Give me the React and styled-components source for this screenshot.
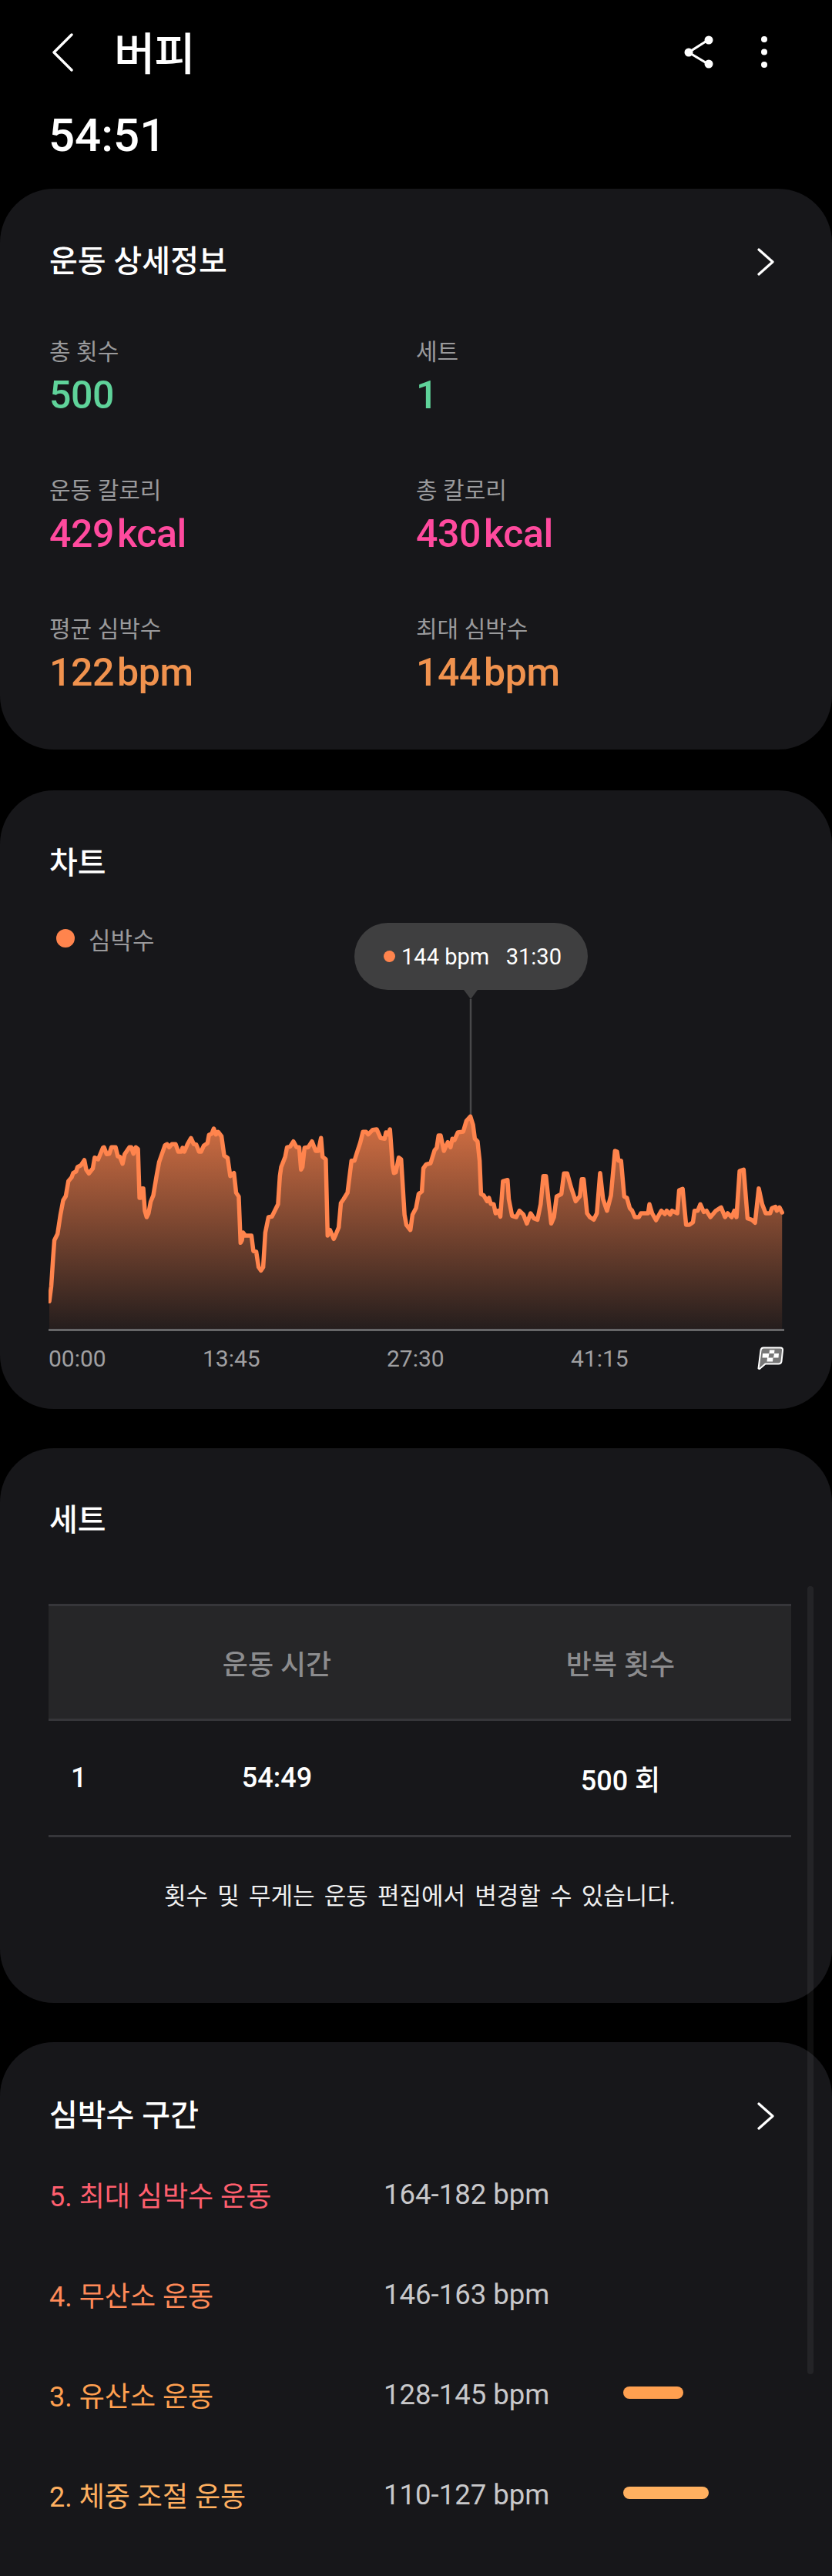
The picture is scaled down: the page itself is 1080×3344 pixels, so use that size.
import React from 'react';
import styled, { createGlobalStyle } from 'styled-components';

const GlobalStyle = createGlobalStyle`
  html, body { margin: 0; padding: 0; background: #000; }
  body { font-family: Roboto, "Noto Sans CJK KR", sans-serif; color: #fff; }
`;

// traced heart rate curve, in px of the reference (x from chart left, y from 1400)
const leftTrace = [[186,868],[193,810],[200,700],[205,630],[217,605],[228,530],[238,475],[248,458],[258,400],[270,385],[276,368],[287,362],[292,345],[305,338],[318,318],[325,355],[335,370],[350,350],[357,308],[370,315],[388,270],[392,268],[402,295],[412,293],[420,268],[436,268],[444,303],[452,305],[462,332],[470,295],[488,268],[495,268],[503,293],[512,268],[520,275],[526,465],[530,465],[536,428],[540,428],[546,515],[553,540],[560,525],[568,480],[578,455],[590,380],[600,325],[622,260],[630,256],[638,268],[648,256],[662,256],[672,285],[684,285],[688,270],[695,285],[707,255],[720,232],[730,255],[740,258],[750,285],[758,285],[768,262],[782,252],[788,220],[798,215],[806,195],[814,218],[822,208],[835,225],[845,300],[858,310],[868,380],[882,368],[890,445],[900,460],[907,640],[912,630],[916,600],[925,612],[948,612],[955,672],[966,675],[975,735],[984,748],[992,735],[1000,600],[1012,540],[1025,538],[1048,490],[1055,380],[1060,345],[1075,305],[1082,268],[1094,265],[1106,245],[1118,268],[1128,268],[1135,355],[1140,345],[1148,270],[1162,268],[1176,245],[1190,282],[1200,282],[1210,232],[1216,305],[1228,315],[1235,612],[1244,590],[1258,625],[1265,610],[1277,580],[1285,485],[1295,470],[1310,445],[1325,320],[1336,320],[1345,290],[1358,250],[1368,208],[1380,208],[1388,218],[1405,200],[1420,198],[1435,232],[1450,235],[1455,210],[1462,218],[1470,198],[1480,340],[1485,368],[1492,365],[1503,308],[1512,315],[1525,530],[1532,570],[1547,590],[1555,530]];
const rightTrace = [[0,505],[10,450],[22,440],[28,350],[38,335],[55,330],[70,280],[78,270],[85,222],[93,222],[105,282],[120,248],[130,268],[137,235],[145,240],[158,210],[178,207],[190,165],[205,148],[215,180],[222,235],[232,245],[240,320],[245,450],[255,455],[268,478],[275,465],[282,488],[293,490],[300,525],[310,515],[318,538],[328,400],[345,395],[350,470],[362,535],[378,540],[390,515],[405,530],[418,565],[432,525],[445,545],[458,550],[470,490],[480,380],[490,380],[500,480],[510,565],[520,540],[530,460],[548,450],[558,370],[570,370],[585,425],[602,478],[618,458],[625,392],[632,392],[645,525],[655,540],[670,550],[682,525],[694,368],[705,470],[720,515],[735,455],[750,282],[758,285],[763,320],[773,320],[785,460],[795,465],[806,505],[815,515],[825,540],[840,540],[848,525],[875,525],[880,490],[890,525],[905,552],[925,515],[938,528],[945,515],[958,530],[965,515],[985,525],[992,435],[1005,430],[1018,570],[1030,570],[1044,560],[1050,515],[1062,515],[1072,490],[1085,520],[1095,515],[1110,540],[1130,515],[1150,502],[1165,540],[1175,525],[1190,540],[1200,515],[1208,540],[1220,360],[1235,355],[1250,545],[1265,550],[1278,562],[1292,428],[1305,490],[1318,525],[1335,525],[1342,505],[1355,500],[1360,515],[1370,502],[1380,522]];

const PLOT_H = 487;
const trace = [
  ...leftTrace.map(([x, y]) => [x / 2.904 - 63, y / 3 + 162]),
  ...rightTrace.map(([x, y]) => [540 + x / 2.904 - 63, y / 3 + 162]),
];
const linePath = 'M' + trace.map(([x, y]) => `${x.toFixed(1)} ${y.toFixed(1)}`).join('L');
const areaPath = `${linePath}L${trace[trace.length - 1][0].toFixed(1)} ${PLOT_H}L${trace[0][0].toFixed(1)} ${PLOT_H}Z`;

const Page = styled.div`
  position: relative;
  width: 1080px;
  height: 3344px;
  overflow: hidden;
  background: #000;
`;
const TopBar = styled.div`
  display: flex;
  align-items: center;
  height: 136px;
  padding: 0 83px 0 68px;
`;
const PageTitle = styled.div`
  flex: 1;
  margin-left: 52px;
  font-size: 58px;
  font-weight: 500;
  line-height: 136px;
  padding-top: 3px;
  height: 133px;
  letter-spacing: -1px;
`;
const Actions = styled.div`
  display: flex;
  align-items: center;
  gap: 59px;
`;
const Duration = styled.div`
  padding-left: 63px;
  height: 109px;
  font-size: 60px;
  font-weight: 500;
  line-height: 80px;
`;
const Card = styled.section`
  background: #17171a;
  border-radius: 70px;
  height: ${p => p.$h}px;
  padding: ${p => p.$top}px 0 0 64px;
  margin-bottom: ${p => p.$gap}px;
  box-sizing: border-box;
`;
const CardHead = styled.div`
  display: flex;
  align-items: center;
  justify-content: space-between;
  height: 60px;
  padding-right: 75px;
`;
const CardTitle = styled.h2`
  margin: 0;
  font-size: 40px;
  font-weight: 500;
  line-height: 60px;
`;
const StatGrid = styled.div`
  display: grid;
  grid-template-columns: 476px 1fr;
  grid-auto-rows: 100px;
  row-gap: 80px;
  margin-top: 67px;
`;
const StatLabel = styled.div`
  font-size: 30px;
  line-height: 40px;
  color: #9a9a9c;
`;
const StatValue = styled.div`
  margin-top: 6px;
  font-size: 50px;
  font-weight: 500;
  line-height: 60px;
  letter-spacing: -0.4px;
  color: ${p => p.$color};
`;
const Unit = styled.span`
  margin-left: 4px;
`;
const ChartSection = styled.div`
  position: relative;
  margin-top: 47px;
  width: 955px;
  margin-left: -1px;
`;
const Legend = styled.div`
  display: flex;
  align-items: center;
  gap: 18px;
  height: 40px;
  padding-left: 10px;
  font-size: 31px;
  color: #9a9a9c;
`;
const LegendDot = styled.span`
  width: 24px;
  height: 24px;
  border-radius: 50%;
  background: #ff844d;
`;
const Tooltip = styled.div`
  position: absolute;
  top: 0;
  left: 397px;
  display: flex;
  align-items: center;
  justify-content: center;
  gap: 8px;
  width: 303px;
  height: 87px;
  padding-left: 4px;
  box-sizing: border-box;
  border-radius: 44px;
  background: #3f3f40;
  font-size: 29px;
  white-space: pre;
  &::after {
    content: "";
    position: absolute;
    left: 142px;
    bottom: -12px;
    border-left: 9px solid transparent;
    border-right: 9px solid transparent;
    border-top: 12px solid #3f3f40;
  }
`;
const TooltipDot = styled.span`
  width: 15px;
  height: 15px;
  border-radius: 50%;
  background: #ff844d;
`;
const Plot = styled.div`
  height: ${PLOT_H}px;
  border-bottom: 3px solid #666668;
  svg { display: block; }
`;
const Axis = styled.div`
  display: grid;
  grid-template-columns: 200px 239px 239px 1fr auto;
  align-items: center;
  height: 70px;
  font-size: 30px;
  color: #a0a0a2;
`;
const SetTable = styled.div`
  width: 964px;
  margin: 78px 0 0 -1px;
`;
const SetRow = styled.div`
  display: grid;
  grid-template-columns: 72px 449px 1fr;
  align-items: center;
  height: ${p => p.$h}px;
  box-sizing: border-box;
  border-bottom: 3px solid #36363a;
  font-size: 36px;
  font-weight: 500;
  text-align: center;
  ${p => p.$head && `
    border-top: 3px solid #36363a;
    background: #262628;
    color: #8c8c8e;
  `}
`;
const SetIndex = styled.span`
  text-align: left;
  padding-left: 29px;
`;
const Note = styled.p`
  width: 964px;
  margin: 52px 0 0 -1px;
  font-size: 31px;
  line-height: 50px;
  text-align: center;
  word-spacing: 4.5px;
  color: #f0f0f0;
`;
const ZoneList = styled.div`
  margin-top: 6px;
`;
const ZoneRow = styled.div`
  display: grid;
  grid-template-columns: 434px 311px 1fr;
  align-items: center;
  height: 130px;
  font-size: 36px;
`;
const ZoneName = styled.span`
  color: ${p => p.$color};
`;
const ZoneRange = styled.span`
  font-size: 36.5px;
  color: #c8c8ca;
`;
const ZoneBar = styled.span`
  display: block;
  width: ${p => p.$w}px;
  height: 16px;
  margin-top: -4px;
  border-radius: 8px;
  background: ${p => p.$color};
`;
const Scrollbar = styled.div`
  position: absolute;
  top: 2059px;
  left: 1048px;
  width: 8px;
  height: 1023px;
  border-radius: 4px;
  background: rgba(255, 255, 255, 0.06);
`;

const BackIcon = () => (
  <svg width="28" height="50" viewBox="0 0 28 50" fill="none" stroke="#fff" strokeWidth="3.4" strokeLinecap="round" strokeLinejoin="round">
    <path d="M25 2 2 25 25 48" />
  </svg>
);
const ShareIcon = () => (
  <svg width="40" height="44" viewBox="0 0 40 44" fill="#fff" stroke="#fff">
    <path d="M31 6 6 22 31 37" fill="none" strokeWidth="3.2" />
    <circle cx="32" cy="6" r="5.5" stroke="none" />
    <circle cx="6" cy="22" r="5.5" stroke="none" />
    <circle cx="32" cy="37" r="5.5" stroke="none" />
  </svg>
);
const MoreIcon = () => (
  <svg width="10" height="44" viewBox="0 0 10 44" fill="#fff">
    <circle cx="5" cy="5" r="4" />
    <circle cx="5" cy="21.5" r="4" />
    <circle cx="5" cy="38" r="4" />
  </svg>
);
const Chevron = () => (
  <svg width="22" height="36" viewBox="0 0 22 36" fill="none" stroke="#fff" strokeWidth="3.2" strokeLinecap="round" strokeLinejoin="round">
    <path d="M2 2 20 18 2 34" />
  </svg>
);
const FinishIcon = () => (
  <svg width="35" height="31" viewBox="0 0 35 31">
    <path d="M8 1.5H30Q33.5 1.5 33 5L31.5 19Q31 22.5 27.500 22.500H10.500L3 29 1.500 28.500 4.500 5Q5 1.500 8 1.500Z" fill="#777" stroke="#fff" strokeWidth="2" strokeLinejoin="round" />
    <path d="M16 4.500H22.500L22 9H28L27.500 14.500H20.500L20 19.500H12.500L13 14.500H6.500L7 9H15.500Z" fill="#fff" />
    <path d="M15.500 9H22L21 14.500H14.500Z" fill="#777" />
  </svg>
);

const stats = [
  { label: '총 횟수', value: '500', color: '#5fd39a' },
  { label: '세트', value: '1', color: '#5fd39a' },
  { label: '운동 칼로리', value: '429', unit: 'kcal', color: '#ff4a9e' },
  { label: '총 칼로리', value: '430', unit: 'kcal', color: '#ff4a9e' },
  { label: '평균 심박수', value: '122', unit: 'bpm', color: '#f0924e' },
  { label: '최대 심박수', value: '144', unit: 'bpm', color: '#f0924e' },
];

const zones = [
  { name: '5. 최대 심박수 운동', range: '164-182 bpm', color: '#ff5f6e' },
  { name: '4. 무산소 운동', range: '146-163 bpm', color: '#ff8a58' },
  { name: '3. 유산소 운동', range: '128-145 bpm', color: '#ffa050', bar: 78 },
  { name: '2. 체중 조절 운동', range: '110-127 bpm', color: '#ffb060', bar: 111 },
];

export default function App() {
  return (
    <Page>
      <GlobalStyle />
      <TopBar>
        <BackIcon />
        <PageTitle>버피</PageTitle>
        <Actions>
          <ShareIcon />
          <MoreIcon />
        </Actions>
      </TopBar>
      <Duration>54:51</Duration>

      <Card $h={728} $top={65} $gap={53}>
        <CardHead>
          <CardTitle>운동 상세정보</CardTitle>
          <Chevron />
        </CardHead>
        <StatGrid>
          {stats.map(s => (
            <div key={s.label}>
              <StatLabel>{s.label}</StatLabel>
              <StatValue $color={s.color}>
                {s.value}
                {s.unit && <Unit>{s.unit}</Unit>}
              </StatValue>
            </div>
          ))}
        </StatGrid>
      </Card>

      <Card $h={803} $top={65} $gap={51}>
        <CardHead>
          <CardTitle>차트</CardTitle>
        </CardHead>
        <ChartSection>
          <Legend>
            <LegendDot />
            심박수
          </Legend>
          <Tooltip>
            <TooltipDot />
            {'144 bpm   31:30'}
          </Tooltip>
          <Plot>
            <svg width="955" height={PLOT_H} viewBox={`0 0 955 ${PLOT_H}`}>
              <defs>
                <linearGradient id="hrFill" gradientUnits="userSpaceOnUse" x1="0" y1="220" x2="0" y2={PLOT_H}>
                  <stop offset="0" stopColor="#ff844d" stopOpacity="0.8" />
                  <stop offset="1" stopColor="#ff844d" stopOpacity="0.06" />
                </linearGradient>
              </defs>
              <line x1="548" y1="59" x2="548" y2="212" stroke="#48484a" strokeWidth="2.500" />
              <path d={areaPath} fill="url(#hrFill)" />
              <path d={linePath} fill="none" stroke="#ff844d" strokeWidth="5.500" strokeLinejoin="round" strokeLinecap="round" />
            </svg>
          </Plot>
          <Axis>
            <span>00:00</span>
            <span>13:45</span>
            <span>27:30</span>
            <span>41:15</span>
            <FinishIcon />
          </Axis>
        </ChartSection>
      </Card>

      <Card $h={720} $top={64} $gap={51}>
        <CardHead>
          <CardTitle>세트</CardTitle>
        </CardHead>
        <SetTable>
          <SetRow $head $h={152}>
            <span />
            <span>운동 시간</span>
            <span>반복 횟수</span>
          </SetRow>
          <SetRow $h={151}>
            <SetIndex>1</SetIndex>
            <span>54:49</span>
            <span>500 회</span>
          </SetRow>
        </SetTable>
        <Note>횟수 및 무게는 운동 편집에서 변경할 수 있습니다.</Note>
      </Card>

      <Card $h={900} $top={66} $gap={0}>
        <CardHead>
          <CardTitle>심박수 구간</CardTitle>
          <Chevron />
        </CardHead>
        <ZoneList>
          {zones.map(z => (
            <ZoneRow key={z.name}>
              <ZoneName $color={z.color}>{z.name}</ZoneName>
              <ZoneRange>{z.range}</ZoneRange>
              {z.bar && <ZoneBar $w={z.bar} $color={z.color} />}
            </ZoneRow>
          ))}
        </ZoneList>
      </Card>
      <Scrollbar />
    </Page>
  );
}
